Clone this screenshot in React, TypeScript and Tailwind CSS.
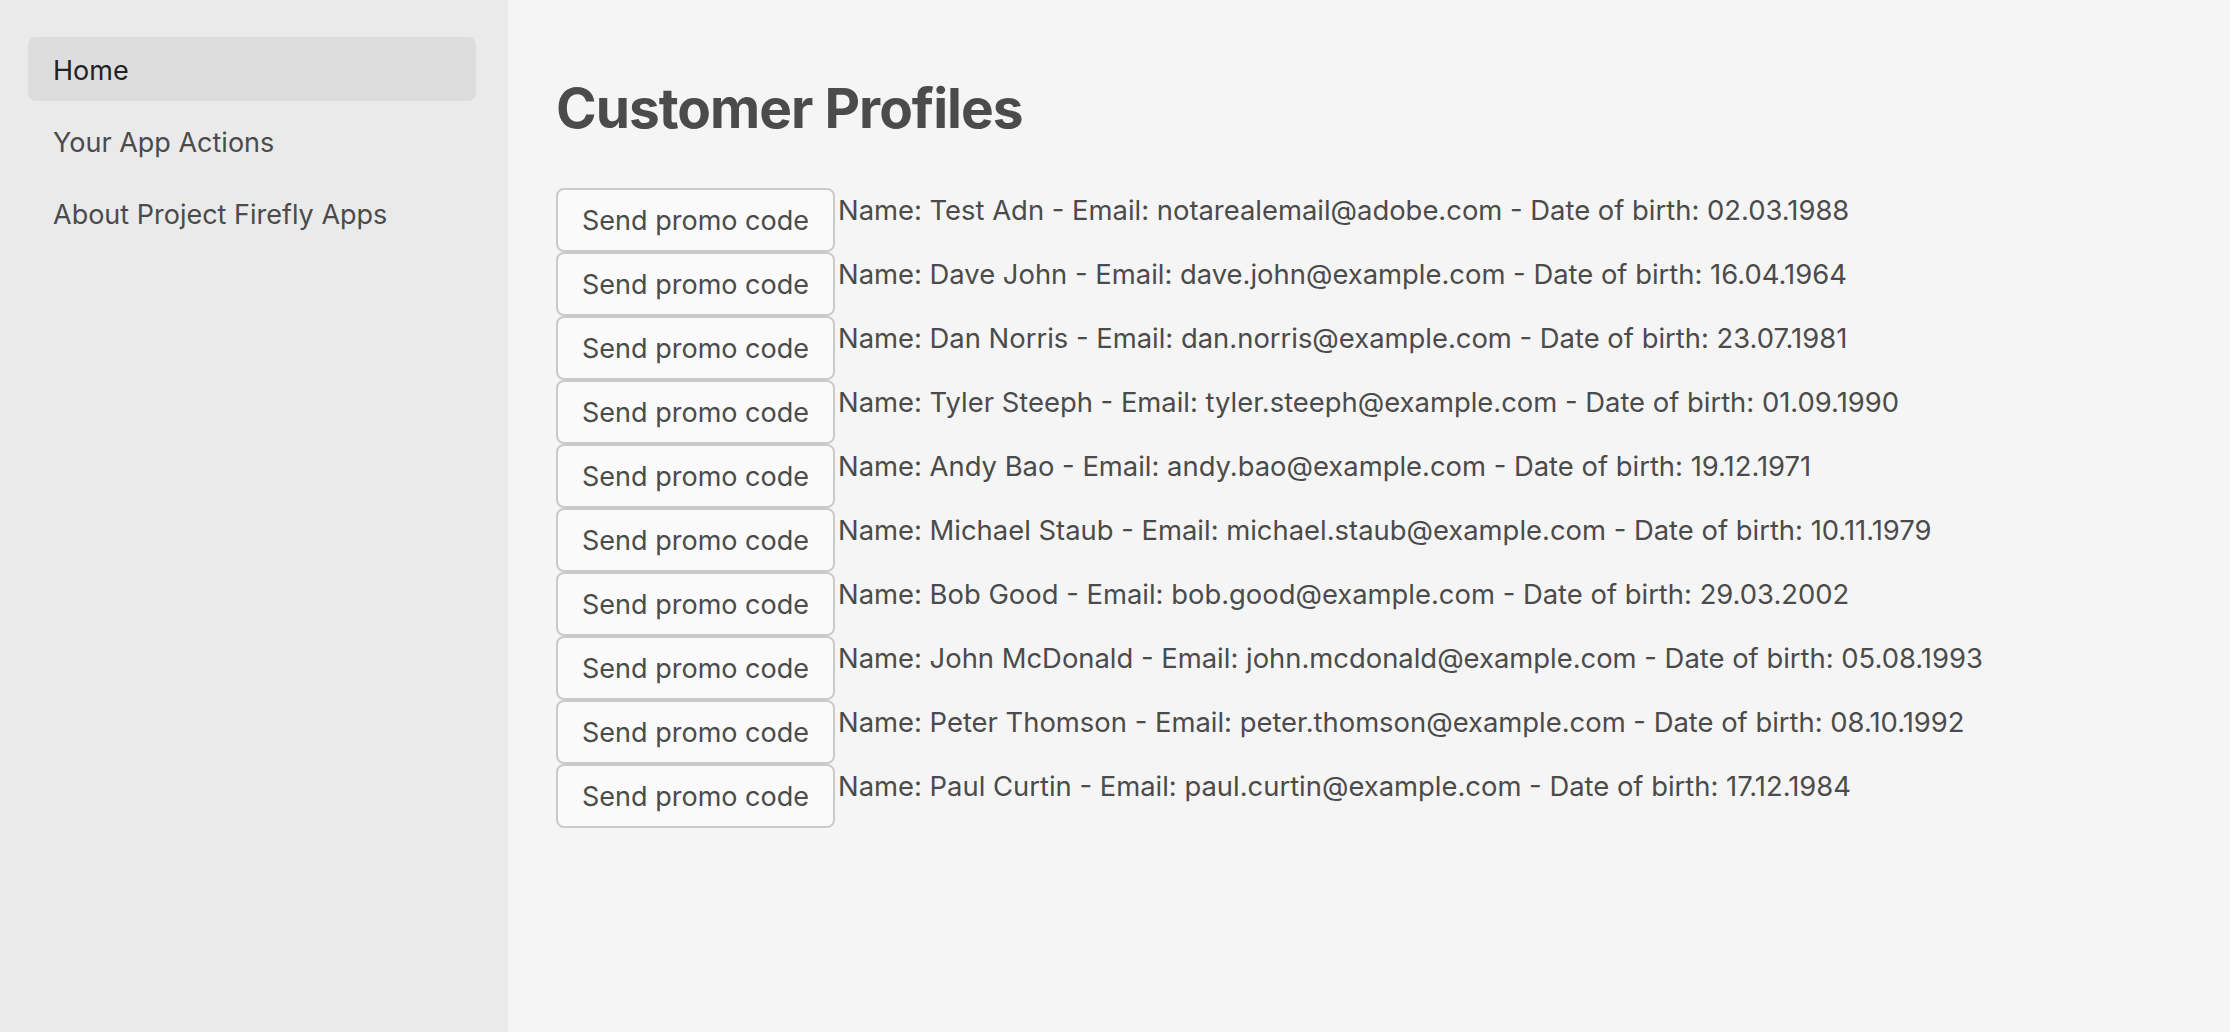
const customers = [
  { name: "Test Adn", email: "notarealemail@adobe.com", dob: "02.03.1988" },
  { name: "Dave John", email: "dave.john@example.com", dob: "16.04.1964" },
  { name: "Dan Norris", email: "dan.norris@example.com", dob: "23.07.1981" },
  { name: "Tyler Steeph", email: "tyler.steeph@example.com", dob: "01.09.1990" },
  { name: "Andy Bao", email: "andy.bao@example.com", dob: "19.12.1971" },
  { name: "Michael Staub", email: "michael.staub@example.com", dob: "10.11.1979" },
  { name: "Bob Good", email: "bob.good@example.com", dob: "29.03.2002" },
  { name: "John McDonald", email: "john.mcdonald@example.com", dob: "05.08.1993" },
  { name: "Peter Thomson", email: "peter.thomson@example.com", dob: "08.10.1992" },
  { name: "Paul Curtin", email: "paul.curtin@example.com", dob: "17.12.1984" },
];

const navItems = ["Home", "Your App Actions", "About Project Firefly Apps"];

const Sidebar = () => {
  return (
    <nav className="w-[508px] shrink-0 bg-[#eaeaea] pl-[28px] pr-[32px] pt-[37px]">
      <ul className="flex flex-col gap-[8px]">
        {navItems.map((item, i) => (
          <li
            key={item}
            className={
              i === 0
                ? "h-[64px] flex items-center px-[25px] pt-[4px] rounded-[8px] bg-[#dddddd] text-[#222222] text-[27px]"
                : "h-[64px] flex items-center px-[25px] pt-[4px] rounded-[8px] text-[#4b4b4b] text-[27px]"
            }
          >
            {item}
          </li>
        ))}
      </ul>
    </nav>
  );
};

const App = () => {
  return (
    <div
      className="flex min-h-[1032px] bg-[#f5f5f5]"
      style={{ fontFamily: "Inter, 'Noto Sans', sans-serif" }}
    >
      <Sidebar />
      <main className="flex-1 pl-[48px] pt-[75px]">
        <h1 className="text-[55px] leading-[66px] font-bold text-[#4b4b4b] tracking-[-1px]">
          Customer Profiles
        </h1>
        <div className="mt-[47px] flex flex-col">
          {customers.map((c) => (
            <div key={c.email} className="flex items-start">
              <button className="w-[279px] h-[64px] shrink-0 pt-[2px] rounded-[8px] border-2 border-[#cacaca] bg-[#fafafa] text-[27px] text-[#4b4b4b]">
                Send promo code
              </button>
              <span className="pl-[3px] pt-[3px] text-[27.4px] leading-[38px] text-[#4b4b4b]">
                Name: {c.name} - Email: {c.email} - Date of birth: {c.dob}
              </span>
            </div>
          ))}
        </div>
      </main>
    </div>
  );
};

export default App;
